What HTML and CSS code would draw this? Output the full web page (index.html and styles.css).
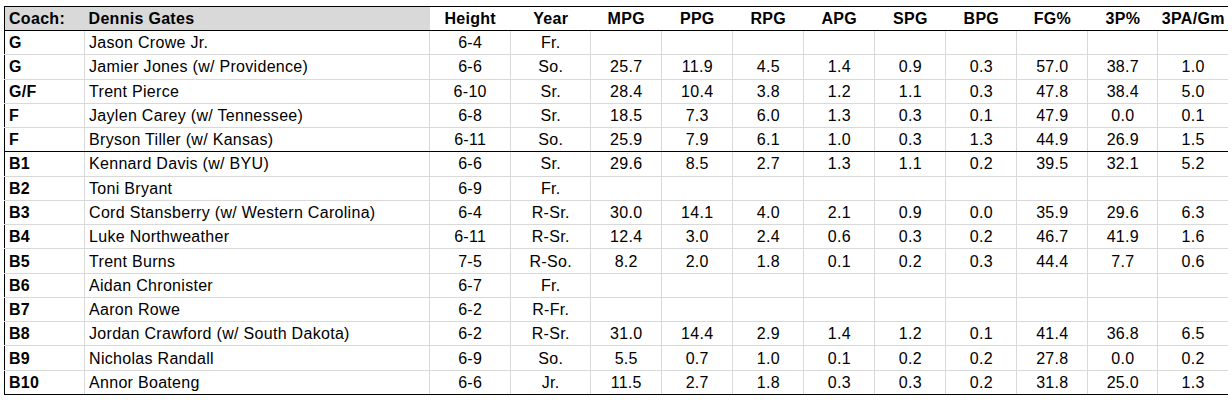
FILE: index.html
```html
<!DOCTYPE html>
<html>
<head>
<meta charset="utf-8">
<link rel="stylesheet" href="styles.css">
</head>
<body>
<table class="roster">
  <colgroup>
    <col class="c-pos"><col class="c-name"><col class="c-ht"><col class="c-yr">
    <col class="c-st"><col class="c-st"><col class="c-st"><col class="c-st"><col class="c-st"><col class="c-st"><col class="c-st">
    <col class="c-st2"><col class="c-st2">
  </colgroup>
  <thead>
    <tr class="head">
      <th class="pos shade">Coach:</th>
      <th class="name shade">Dennis Gates</th>
      <th>Height</th><th>Year</th><th>MPG</th><th>PPG</th><th>RPG</th><th>APG</th><th>SPG</th><th>BPG</th><th>FG%</th><th>3P%</th><th>3PA/Gm</th>
    </tr>
  </thead>
  <tbody>
    <tr><td class="pos">G</td><td class="name">Jason Crowe Jr.</td><td>6-4</td><td>Fr.</td><td></td><td></td><td></td><td></td><td></td><td></td><td></td><td></td><td></td></tr>
    <tr><td class="pos">G</td><td class="name">Jamier Jones (w/ Providence)</td><td>6-6</td><td>So.</td><td>25.7</td><td>11.9</td><td>4.5</td><td>1.4</td><td>0.9</td><td>0.3</td><td>57.0</td><td>38.7</td><td>1.0</td></tr>
    <tr><td class="pos">G/F</td><td class="name">Trent Pierce</td><td>6-10</td><td>Sr.</td><td>28.4</td><td>10.4</td><td>3.8</td><td>1.2</td><td>1.1</td><td>0.3</td><td>47.8</td><td>38.4</td><td>5.0</td></tr>
    <tr><td class="pos">F</td><td class="name">Jaylen Carey (w/ Tennessee)</td><td>6-8</td><td>Sr.</td><td>18.5</td><td>7.3</td><td>6.0</td><td>1.3</td><td>0.3</td><td>0.1</td><td>47.9</td><td>0.0</td><td>0.1</td></tr>
    <tr class="split"><td class="pos">F</td><td class="name">Bryson Tiller (w/ Kansas)</td><td>6-11</td><td>So.</td><td>25.9</td><td>7.9</td><td>6.1</td><td>1.0</td><td>0.3</td><td>1.3</td><td>44.9</td><td>26.9</td><td>1.5</td></tr>
    <tr><td class="pos">B1</td><td class="name">Kennard Davis (w/ BYU)</td><td>6-6</td><td>Sr.</td><td>29.6</td><td>8.5</td><td>2.7</td><td>1.3</td><td>1.1</td><td>0.2</td><td>39.5</td><td>32.1</td><td>5.2</td></tr>
    <tr><td class="pos">B2</td><td class="name">Toni Bryant</td><td>6-9</td><td>Fr.</td><td></td><td></td><td></td><td></td><td></td><td></td><td></td><td></td><td></td></tr>
    <tr><td class="pos">B3</td><td class="name">Cord Stansberry (w/ Western Carolina)</td><td>6-4</td><td>R-Sr.</td><td>30.0</td><td>14.1</td><td>4.0</td><td>2.1</td><td>0.9</td><td>0.0</td><td>35.9</td><td>29.6</td><td>6.3</td></tr>
    <tr><td class="pos">B4</td><td class="name">Luke Northweather</td><td>6-11</td><td>R-Sr.</td><td>12.4</td><td>3.0</td><td>2.4</td><td>0.6</td><td>0.3</td><td>0.2</td><td>46.7</td><td>41.9</td><td>1.6</td></tr>
    <tr><td class="pos">B5</td><td class="name">Trent Burns</td><td>7-5</td><td>R-So.</td><td>8.2</td><td>2.0</td><td>1.8</td><td>0.1</td><td>0.2</td><td>0.3</td><td>44.4</td><td>7.7</td><td>0.6</td></tr>
    <tr><td class="pos">B6</td><td class="name">Aidan Chronister</td><td>6-7</td><td>Fr.</td><td></td><td></td><td></td><td></td><td></td><td></td><td></td><td></td><td></td></tr>
    <tr><td class="pos">B7</td><td class="name">Aaron Rowe</td><td>6-2</td><td>R-Fr.</td><td></td><td></td><td></td><td></td><td></td><td></td><td></td><td></td><td></td></tr>
    <tr><td class="pos">B8</td><td class="name">Jordan Crawford (w/ South Dakota)</td><td>6-2</td><td>R-Sr.</td><td>31.0</td><td>14.4</td><td>2.9</td><td>1.4</td><td>1.2</td><td>0.1</td><td>41.4</td><td>36.8</td><td>6.5</td></tr>
    <tr><td class="pos">B9</td><td class="name">Nicholas Randall</td><td>6-9</td><td>So.</td><td>5.5</td><td>0.7</td><td>1.0</td><td>0.1</td><td>0.2</td><td>0.2</td><td>27.8</td><td>0.0</td><td>0.2</td></tr>
    <tr><td class="pos">B10</td><td class="name">Annor Boateng</td><td>6-6</td><td>Jr.</td><td>11.5</td><td>2.7</td><td>1.8</td><td>0.3</td><td>0.3</td><td>0.2</td><td>31.8</td><td>25.0</td><td>1.3</td></tr>
  </tbody>
</table>
</body>
</html>
```
FILE: styles.css
```css
html, body {
  margin: 0;
  padding: 0;
  background: #ffffff;
}

body {
  padding: 6px 0 0 4px;
}

.roster {
  width: 1224px;
  table-layout: fixed;
  border-collapse: collapse;
  border-top: 1px solid #000;
  border-bottom: 1px solid #000;
  border-left: 1px solid #000;
  font-family: "Liberation Sans", Arial, sans-serif;
  font-size: 16px;
  letter-spacing: 0.3px;
  color: #000;
}

.c-pos { width: 80px; }
.c-name { width: 345px; }
.c-ht { width: 81px; }
.c-yr { width: 80px; }
.c-st { width: 71px; }
.c-st2 { width: 70px; }

.roster th,
.roster td {
  padding: 0 4px;
  text-align: center;
  vertical-align: middle;
  white-space: nowrap;
  overflow: hidden;
}

.roster th {
  height: 23px;
  font-weight: bold;
  border-bottom: 1px solid #000;
}

.roster th.shade {
  background: #d9d9d9;
}

.roster td {
  height: 22.27px;
  padding-top: 1px;
  border: 1px solid #d9d9d9;
}

.roster tr td:first-child {
  border-left: 1px solid #000;
}

.roster tr td:last-child {
  border-right: none;
}

.roster tbody tr:last-child td {
  border-bottom: 1px solid #000;
}

.roster tr.split td {
  border-bottom: 1px solid #000;
}

.roster .pos {
  text-align: left;
  font-weight: bold;
}

.roster .name {
  text-align: left;
}
```
